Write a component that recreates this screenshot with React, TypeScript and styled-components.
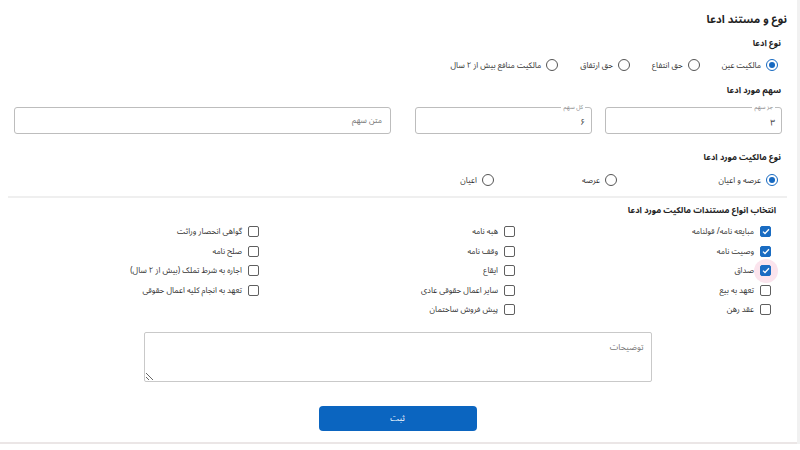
import React from 'react';
import styled, { createGlobalStyle } from 'styled-components';

const GlobalStyle = createGlobalStyle`
  html, body {
    margin: 0;
    padding: 0;
    background: #fff;
  }
  body {
    font-family: "Noto Sans Arabic", "Noto Naskh Arabic", "Vazirmatn", "DejaVu Sans", sans-serif;
    color: #222;
  }
`;

const Page = styled.div`
  width: 800px;
  height: 450px;
  display: flex;
  background: #fff;
`;

const Panel = styled.div`
  direction: rtl;
  box-sizing: border-box;
  width: 797px;
  height: 444px;
  padding: 0 10px 0 8px;
  border-bottom: 2px solid #ebe6e6;
  display: flex;
  flex-direction: column;
`;

const SideStrip = styled.div`
  width: 3px;
  height: 444px;
  background: #f1f1f1;
`;

const Title = styled.h1`
  margin: 12px 0 0;
  font-size: 11px;
  line-height: 16px;
  font-weight: 700;
  color: #222;
`;

const SectionLabel = styled.div<{ $top: number; $inset?: number }>`
  margin-top: ${(p) => p.$top}px;
  padding-right: ${(p) => p.$inset ?? 6}px;
  font-size: 8.5px;
  line-height: 14px;
  font-weight: 700;
  color: #222;
`;

const RadioRow = styled.div<{ $top: number }>`
  margin-top: ${(p) => p.$top}px;
  padding-right: 9px;
  display: flex;
  gap: 22px;
  height: 16px;
  align-items: center;
`;

const RadioItem = styled.label<{ $width?: number }>`
  display: flex;
  align-items: center;
  gap: 5px;
  font-size: 8px;
  color: #333;
  width: ${(p) => (p.$width ? `${p.$width}px` : 'auto')};
  flex: none;
`;

const RadioCircle = styled.span<{ $on?: boolean }>`
  box-sizing: border-box;
  width: 12px;
  height: 12px;
  border-radius: 50%;
  border: 1.5px solid ${(p) => (p.$on ? '#1669c1' : '#555')};
  display: flex;
  align-items: center;
  justify-content: center;
  &::after {
    content: '';
    width: 6px;
    height: 6px;
    border-radius: 50%;
    background: ${(p) => (p.$on ? '#1669c1' : 'transparent')};
  }
`;

const InputRow = styled.div`
  margin-top: 10px;
  padding: 0 5px 0 6px;
  display: flex;
  height: 27px;
`;

const Field = styled.div<{ $width?: number; $gap?: number }>`
  position: relative;
  box-sizing: border-box;
  height: 27px;
  border: 1px solid #bdbdbd;
  border-radius: 3px;
  width: ${(p) => (p.$width ? `${p.$width}px` : 'auto')};
  flex: ${(p) => (p.$width ? 'none' : '1')};
  margin-right: ${(p) => p.$gap ?? 0}px;
  display: flex;
  align-items: center;
  padding: 0 6px;
  font-size: 8.5px;
`;

const FloatLabel = styled.span`
  position: absolute;
  top: -5px;
  right: 6px;
  padding: 0 2px;
  background: #fff;
  font-size: 6px;
  line-height: 8px;
  color: #888;
`;

const FieldValue = styled.span`
  margin-top: 3px;
  color: #333;
`;

const Placeholder = styled.span`
  color: #777;
  font-size: 8px;
  padding-right: 2px;
`;

const Divider = styled.hr`
  margin: 8px 0 0;
  border: none;
  height: 2px;
  background: #efefef;
`;

const CheckGrid = styled.div`
  margin-top: 5px;
  padding-right: 16px;
  display: grid;
  grid-template-columns: repeat(3, 256px);
  grid-template-rows: repeat(5, 19.5px);
  grid-auto-flow: column;
`;

const CheckItem = styled.label`
  display: flex;
  align-items: center;
  gap: 6px;
  font-size: 8px;
  color: #333;
`;

const BoxWrap = styled.span<{ $focus?: boolean }>`
  position: relative;
  isolation: isolate;
  display: flex;
  flex: none;
  &::before {
    content: '';
    display: ${(p) => (p.$focus ? 'block' : 'none')};
    position: absolute;
    width: 24px;
    height: 24px;
    top: 50%;
    left: 50%;
    transform: translate(-50%, -50%);
    border-radius: 50%;
    background: #fbe4ed;
    z-index: -1;
  }
`;

const Box = styled.span<{ $on?: boolean }>`
  box-sizing: border-box;
  width: 11px;
  height: 11px;
  border-radius: 2px;
  border: 1.5px solid ${(p) => (p.$on ? '#1a6cc2' : '#5f5f5f')};
  background: ${(p) => (p.$on ? '#1a6cc2' : '#fff')};
  display: flex;
  align-items: center;
  justify-content: center;
  svg {
    display: block;
  }
`;

const TextArea = styled.textarea`
  direction: rtl;
  display: block;
  box-sizing: border-box;
  margin: 12px auto 0;
  width: 508px;
  height: 50px;
  border: 1px solid #c9c9c9;
  border-radius: 2px;
  padding: 7px 7px;
  font-family: inherit;
  font-size: 8.5px;
  line-height: 14px;
  color: #333;
  outline: none;
  &::placeholder {
    color: #777;
  }
`;

const SubmitButton = styled.button`
  display: block;
  margin: 24px auto 0;
  width: 158px;
  height: 25px;
  border: none;
  border-radius: 4px;
  background: #0b65c0;
  color: #fff;
  font-family: inherit;
  font-size: 8.5px;
`;

const claimTypes = ['مالکیت عین', 'حق انتفاع', 'حق ارتفاق', 'مالکیت منافع بیش از ۲ سال'];

const ownershipTypes = [
  { label: 'عرصه و اعیان', width: 139 },
  { label: 'عرصه', width: 101 },
  { label: 'اعیان' },
];

const docs: { label: string; on?: boolean; focus?: boolean }[] = [
  { label: 'مبایعه نامه/ قولنامه', on: true },
  { label: 'وصیت نامه', on: true },
  { label: 'صداق', on: true, focus: true },
  { label: 'تعهد به بیع' },
  { label: 'عقد رهن' },
  { label: 'هبه نامه' },
  { label: 'وقف نامه' },
  { label: 'ایقاع' },
  { label: 'سایر اعمال حقوقی عادی' },
  { label: 'پیش فروش ساختمان' },
  { label: 'گواهی انحصار وراثت' },
  { label: 'صلح نامه' },
  { label: 'اجاره به شرط تملک (بیش از ۲ سال)' },
  { label: 'تعهد به انجام کلیه اعمال حقوقی' },
];

const Check = () => (
  <svg width="8" height="7" viewBox="0 0 8 7">
    <path d="M1 3.6 L3 5.5 L7 1.2" fill="none" stroke="#fff" strokeWidth="1.3" />
  </svg>
);

const App: React.FC = () => {
  return (
    <Page>
      <GlobalStyle />
      <Panel>
        <Title>نوع و مستند ادعا</Title>

        <SectionLabel $top={8}>نوع ادعا</SectionLabel>
        <RadioRow $top={7}>
          {claimTypes.map((t, i) => (
            <RadioItem key={t}>
              <RadioCircle $on={i === 0} />
              {t}
            </RadioItem>
          ))}
        </RadioRow>

        <SectionLabel $top={10}>سهم مورد ادعا</SectionLabel>
        <InputRow>
          <Field $width={177}>
            <FloatLabel>جز سهم</FloatLabel>
            <FieldValue>۳</FieldValue>
          </Field>
          <Field $width={177} $gap={13}>
            <FloatLabel>کل سهم</FloatLabel>
            <FieldValue>۶</FieldValue>
          </Field>
          <Field $gap={24}>
            <Placeholder>متن سهم</Placeholder>
          </Field>
        </InputRow>

        <SectionLabel $top={16}>نوع مالکیت مورد ادعا</SectionLabel>
        <RadioRow $top={8}>
          {ownershipTypes.map((t, i) => (
            <RadioItem key={t.label} $width={t.width}>
              <RadioCircle $on={i === 0} />
              {t.label}
            </RadioItem>
          ))}
        </RadioRow>

        <Divider />

        <SectionLabel $top={5} $inset={11}>
          انتخاب انواع مستندات مالکیت مورد ادعا
        </SectionLabel>
        <CheckGrid>
          {docs.map((d) => (
            <CheckItem key={d.label}>
              <BoxWrap $focus={d.focus}>
                <Box $on={d.on}>{d.on && <Check />}</Box>
              </BoxWrap>
              {d.label}
            </CheckItem>
          ))}
        </CheckGrid>

        <TextArea placeholder="توضیحات" />
        <SubmitButton>ثبت</SubmitButton>
      </Panel>
      <SideStrip />
    </Page>
  );
};

export default App;
